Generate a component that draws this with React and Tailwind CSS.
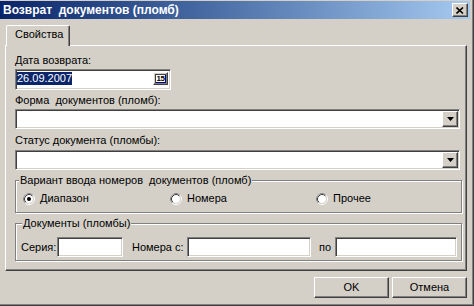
const sunken =
  "bg-white border border-t-[#808080] border-l-[#808080] border-r-white border-b-white shadow-[inset_1px_1px_0_#404040,inset_-1px_-1px_0_#d4d0c8] p-[1px]";
const raised =
  "bg-[#d4d0c8] border border-t-white border-l-white border-r-[#404040] border-b-[#404040] shadow-[inset_-1px_-1px_0_#808080]";
const groupBox =
  "w-[447px] border border-[#808080] shadow-[inset_1px_1px_0_#fff,1px_1px_0_#fff]";

function Radio({ checked }) {
  return (
    <svg width="12" height="12" viewBox="0 0 12 12" className="shrink-0">
      <circle cx="6" cy="6" r="5.5" fill="none" stroke="#ffffff" />
      <path d="M2.11 9.89 A5.5 5.5 0 0 1 9.89 2.11" fill="none" stroke="#808080" />
      <circle cx="6" cy="6" r="4.5" fill="#ffffff" stroke="#d4d0c8" />
      <path d="M2.82 9.18 A4.5 4.5 0 0 1 9.18 2.82" fill="none" stroke="#404040" />
      {checked && <circle cx="6" cy="6" r="2" fill="#000000" />}
    </svg>
  );
}

function DropButton() {
  return (
    <div className={`${raised} w-[16px] h-[16px] flex items-center justify-center`}>
      <svg width="7" height="4" viewBox="0 0 7 4">
        <polygon points="0,0 7,0 3.5,4" fill="#000" />
      </svg>
    </div>
  );
}

function Combo() {
  return (
    <div className={`${sunken} w-[445px] h-[20px] flex justify-end`}>
      <DropButton />
    </div>
  );
}

export default function App() {
  return (
    <div className="w-[474px] h-[306px] bg-[#d4d0c8] pr-[4px] pb-[4px] flex flex-col font-['Liberation_Sans',Arial,sans-serif] text-[11px] leading-[13px] text-black shadow-[inset_-1px_-1px_0_#404040,inset_-2px_-2px_0_#808080] select-none">
      {/* title bar */}
      <div className="mt-[1px] h-[18px] flex items-center justify-between bg-linear-to-r from-[#0a246a] to-[#a6caf0] pl-[3px] pr-[2px]">
        <span className="text-white font-bold text-[12px] whitespace-pre">Возврат  документов (пломб)</span>
        <div className={`${raised} w-[16px] h-[14px] flex items-center justify-center`}>
          <svg width="8" height="7" viewBox="0 0 8 7">
            <path d="M0.5 0.5 L7 6.5 M7 0.5 L0.5 6.5" stroke="#000" strokeWidth="1.6" />
          </svg>
        </div>
      </div>

      {/* tabs */}
      <div className="mt-[6px] pl-[6px] flex">
        <div className="relative z-10 -mb-[1px] h-[21px] w-[64px] bg-[#d4d0c8] border-t border-l border-r border-t-white border-l-white border-r-[#404040] rounded-t-[2px] shadow-[inset_-1px_0_0_#808080] pl-[8px] pt-[2px]">
          Свойства
        </div>
      </div>

      <div className="ml-[5px] w-[462px] h-[226px] border border-t-white border-l-white border-r-[#404040] border-b-[#404040] shadow-[inset_-1px_-1px_0_#808080] pl-[9px] pt-[8px] flex flex-col items-start">
        <span>Дата возврата:</span>
        <div className={`${sunken} mt-[2px] w-[156px] h-[21px] flex items-start justify-between`}>
          <span className="mt-[1px] h-[13px] bg-[#0a246a] text-white">26.09.2007</span>
          <div className={`${raised} mt-[1px] mr-[1px] w-[15px] h-[13px] flex items-center justify-center`}>
            <span className="w-[11px] h-[9px] bg-white shadow-[inset_1px_1px_0_#404040,inset_-1px_-1px_0_#000080] flex items-center justify-center text-[8px] leading-[9px] font-bold tracking-[-0.5px] text-black">
              15
            </span>
          </div>
        </div>

        <span className="mt-[4px] whitespace-pre">Форма  документов (пломб):</span>
        <div className="mt-[2px]">
          <Combo />
        </div>

        <span className="mt-[5px]">Статус документа (пломбы):</span>
        <div className="mt-[3px]">
          <Combo />
        </div>

        <fieldset className={`${groupBox} mt-[4px] pb-[8px]`}>
          <legend className="ml-[3px] px-[1px] bg-[#d4d0c8] whitespace-pre">Вариант ввода номеров  документов (пломб)</legend>
          <div className="mt-[5px] pl-[7px] h-[12px] grid grid-cols-[147px_146px_1fr]">
            <label className="flex items-center gap-[5px]">
              <Radio checked />
              <span>Диапазон</span>
            </label>
            <label className="flex items-center gap-[5px]">
              <Radio />
              <span>Номера</span>
            </label>
            <label className="flex items-center gap-[5px]">
              <Radio />
              <span>Прочее</span>
            </label>
          </div>
        </fieldset>

        <fieldset className={`${groupBox} mt-[4px] pt-[7px] pb-[3px]`}>
          <legend className="ml-[6px] px-[1px] bg-[#d4d0c8]">Документы (пломбы)</legend>
          <div className="pl-[5px] flex items-center">
            <span className="w-[36px]">Серия:</span>
            <div className={`${sunken} w-[66px] h-[20px]`} />
            <span className="ml-[9px] w-[55px]">Номера с:</span>
            <div className={`${sunken} w-[124px] h-[20px]`} />
            <span className="ml-[8px] w-[16px]">по</span>
            <div className={`${sunken} w-[122px] h-[20px]`} />
          </div>
        </fieldset>
      </div>

      {/* buttons */}
      <div className="mt-[6px] pr-[3px] flex justify-end gap-[3px]">
        <button className={`${raised} w-[75px] h-[21px] flex items-center justify-center`}>OK</button>
        <button className={`${raised} w-[75px] h-[21px] flex items-center justify-center`}>Отмена</button>
      </div>
    </div>
  );
}
